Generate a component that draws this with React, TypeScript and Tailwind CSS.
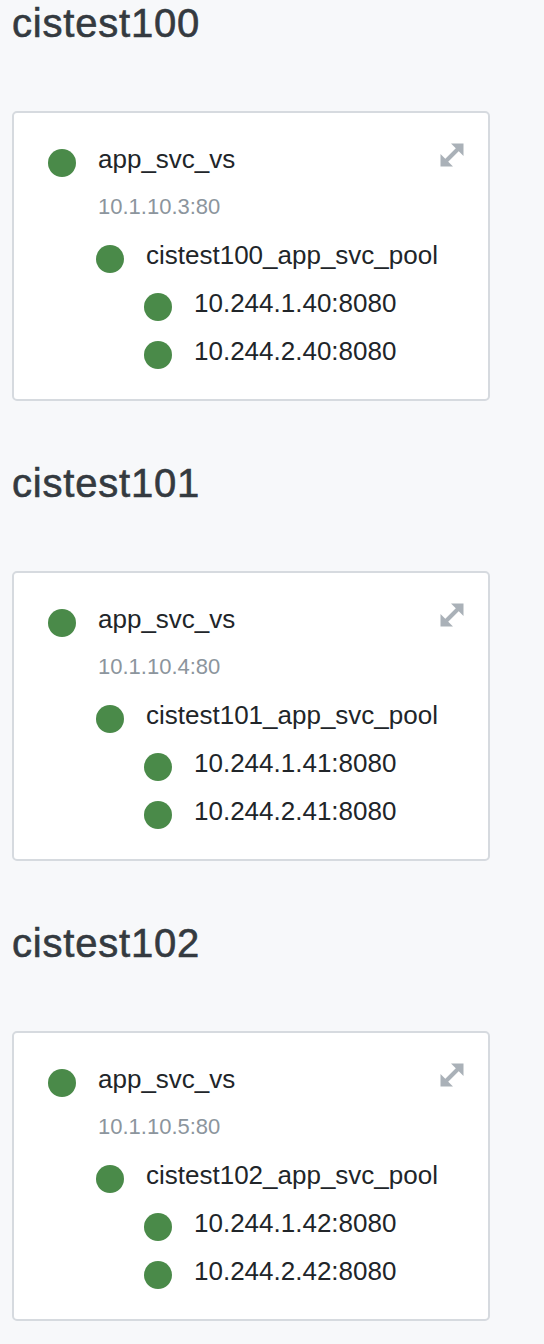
const groups = [
  { name: 'cistest100', vip: '10.1.10.3:80', members: ['10.244.1.40:8080', '10.244.2.40:8080'] },
  { name: 'cistest101', vip: '10.1.10.4:80', members: ['10.244.1.41:8080', '10.244.2.41:8080'] },
  { name: 'cistest102', vip: '10.1.10.5:80', members: ['10.244.1.42:8080', '10.244.2.42:8080'] },
]

function Dot() {
  return <span className="mt-[10px] h-7 w-7 shrink-0 rounded-full bg-[#4a8a49]" />
}

function ExpandIcon() {
  return (
    <svg viewBox="0 0 24 24" className="h-[24px] w-[24px]" fill="#aab1b8">
      <polygon points="11,0.5 23.5,0.5 23.5,13" />
      <polygon points="0.5,11 0.5,23.5 13,23.5" />
      <line x1="5" y1="19" x2="19" y2="5" stroke="#aab1b8" strokeWidth="4" />
    </svg>
  )
}

function Row({ indent, label }: { indent: string; label: string }) {
  return (
    <div className={`flex h-12 items-start gap-[22px] ${indent}`}>
      <Dot />
      <span className="mt-[7px] text-[26px] leading-[26px] text-[#212529]">{label}</span>
    </div>
  )
}

export default function App() {
  return (
    <div
      className="min-h-[1344px] bg-[#f7f8fa] px-3 pt-[3px]"
      style={{ fontFamily: '"Liberation Sans", Arial, sans-serif' }}
    >
      {groups.map((g) => (
        <section key={g.name} className="mb-[62px]">
          <h2 className="h-10 text-[40px] leading-10 tracking-[0.8px] text-[#343a40] [-webkit-text-stroke:0.6px_#343a40]">
            {g.name}
          </h2>
          <div className="relative mt-[68px] w-[478px] rounded-[5px] border-2 border-[#d6dadf] bg-white pb-5 pl-[34px] pt-[26px]">
            <div className="absolute right-[24px] top-[30px]">
              <ExpandIcon />
            </div>
            <Row indent="pl-0" label="app_svc_vs" />
            <div className="h-12 pl-[50px] pt-[9px] text-[22px] leading-[22px] text-[#8c959d]">{g.vip}</div>
            <Row indent="pl-12" label={`${g.name}_app_svc_pool`} />
            {g.members.map((m) => (
              <Row key={m} indent="pl-24" label={m} />
            ))}
          </div>
        </section>
      ))}
    </div>
  )
}
